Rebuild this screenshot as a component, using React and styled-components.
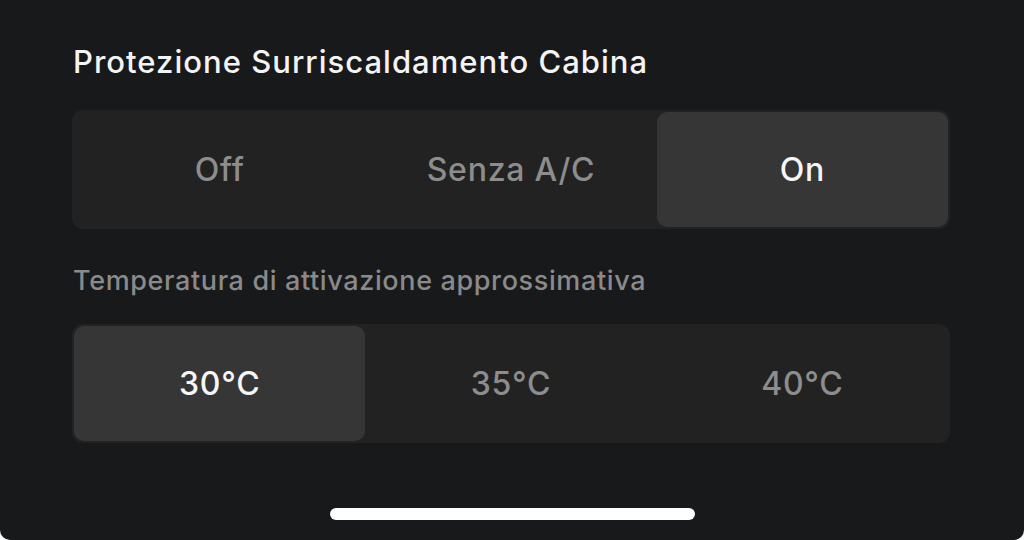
import React, { useState } from "react";
import styled, { createGlobalStyle } from "styled-components";

const GlobalStyle = createGlobalStyle`
  html, body {
    margin: 0;
    padding: 0;
    background: #ffffff;
  }
  * { box-sizing: border-box; }
`;

const Screen = styled.div`
  width: 1024px;
  height: 540px;
  background: #18191b;
  border-radius: 0 0 10px 10px;
  padding: 43px 74px 0 72px;
  display: flex;
  flex-direction: column;
  font-family: Inter, "Noto Sans", "Liberation Sans", sans-serif;
  overflow: hidden;
`;

const Title = styled.h1`
  margin: 0 0 0 1px;
  font-size: 31px;
  font-weight: 500;
  line-height: 38px;
  color: #f4f4f4;
  letter-spacing: 1.02px;
  white-space: nowrap;
`;

const Caption = styled.div`
  margin: 36px 0 0 1px;
  font-size: 27px;
  font-weight: 500;
  line-height: 32px;
  color: #8a8a8a;
  letter-spacing: 0.63px;
  white-space: nowrap;
`;

const Segmented = styled.div`
  margin-top: ${(p) => p.$top}px;
  height: 119px;
  padding: 2px;
  border-radius: 11px;
  background: #222222;
  display: grid;
  grid-template-columns: repeat(3, 1fr);
`;

const Segment = styled.button`
  border: none;
  margin: 0;
  padding: 0;
  border-radius: 10px;
  background: ${(p) => (p.$active ? "#363636" : "transparent")};
  color: ${(p) => (p.$active ? "#f6f6f6" : "#8d8d8d")};
  font-family: inherit;
  font-size: 32px;
  font-weight: 500;
  letter-spacing: 0.75px;
  display: flex;
  align-items: center;
  justify-content: center;
  cursor: pointer;
`;

const HomeBar = styled.div`
  margin: auto auto 20px;
  width: 365px;
  height: 12px;
  border-radius: 6px;
  background: #ffffff;
  transform: translateX(1px);
`;

const modes = ["Off", "Senza A/C", "On"];
const temps = ["30°C", "35°C", "40°C"];

export default function App() {
  const [mode, setMode] = useState(2);
  const [temp, setTemp] = useState(0);

  return (
    <>
      <GlobalStyle />
      <Screen>
        <Title>Protezione Surriscaldamento Cabina</Title>
        <Segmented $top={29}>
          {modes.map((m, i) => (
            <Segment key={m} $active={mode === i} onClick={() => setMode(i)}>
              {m}
            </Segment>
          ))}
        </Segmented>
        <Caption>Temperatura di attivazione approssimativa</Caption>
        <Segmented $top={27}>
          {temps.map((t, i) => (
            <Segment key={t} $active={temp === i} onClick={() => setTemp(i)}>
              {t}
            </Segment>
          ))}
        </Segmented>
        <HomeBar />
      </Screen>
    </>
  );
}
